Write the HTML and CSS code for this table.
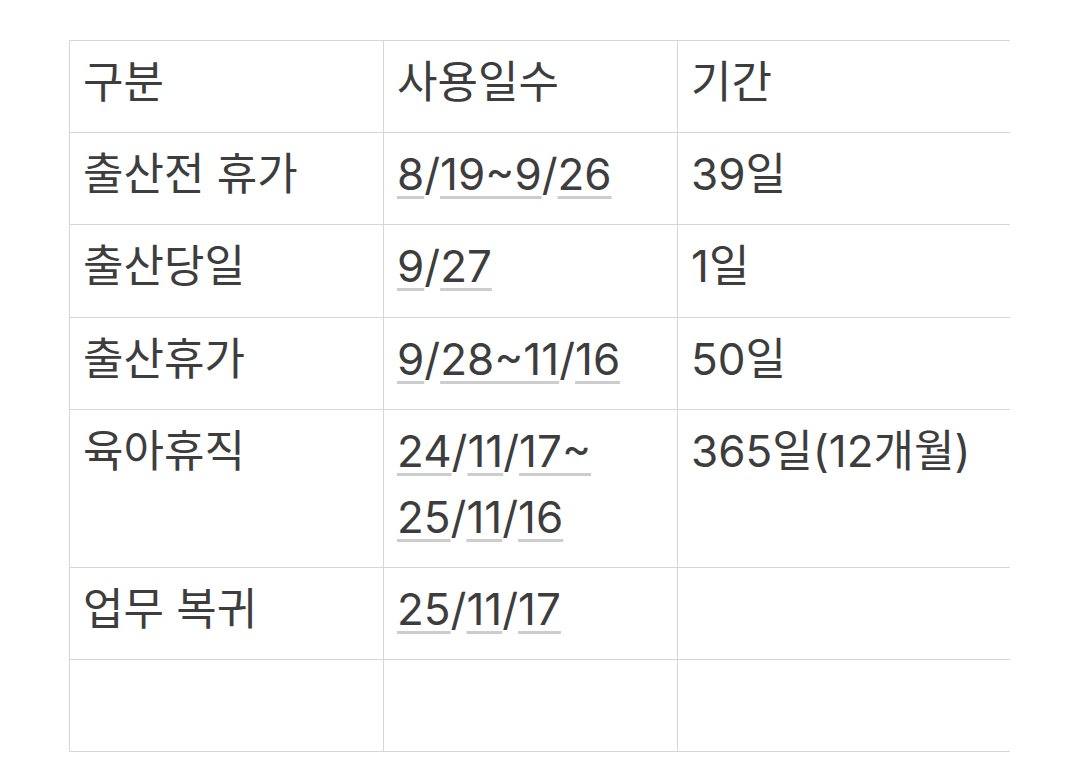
FILE: index.html
```html
<!DOCTYPE html>
<html lang="ko">
<head>
<meta charset="utf-8">
<link rel="stylesheet" href="styles.css">
</head>
<body>
<div class="wrap">
  <table class="tbl">
    <colgroup>
      <col class="c1"><col class="c2"><col class="c3">
    </colgroup>
    <tr><td>구분</td><td>사용일수</td><td>기간</td></tr>
    <tr><td>출산전 휴가</td><td><span class="u">8</span>/<span class="u">19~9</span>/<span class="u">26</span></td><td>39일</td></tr>
    <tr><td>출산당일</td><td><span class="u">9</span>/<span class="u">27</span></td><td>1일</td></tr>
    <tr><td>출산휴가</td><td><span class="u">9</span>/<span class="u">28~11</span>/<span class="u">16</span></td><td>50일</td></tr>
    <tr><td>육아휴직</td><td><span class="u">24</span>/<span class="u">11</span>/<span class="u">17~</span><br><span class="u">25</span>/<span class="u">11</span>/<span class="u">16</span></td><td>365일(12개월)</td></tr>
    <tr><td>업무 복귀</td><td><span class="u">25</span>/<span class="u">11</span>/<span class="u">17</span></td><td></td></tr>
    <tr><td></td><td></td><td></td></tr>
  </table>
</div>
</body>
</html>
```
FILE: styles.css
```css
html, body {
  margin: 0;
  padding: 0;
  background: #ffffff;
}
body {
  font-family: Inter, "Noto Sans CJK KR", sans-serif;
  color: #3d3d3d;
}
.wrap {
  margin: 40px 0 0 69px;
  width: 941px;
  overflow: hidden;
}
.tbl {
  border-collapse: collapse;
  table-layout: fixed;
  width: 1100px;
}
.c1 { width: 314px; }
.c2 { width: 294px; }
.c3 { width: 492px; }
.tbl td {
  border: 1px solid #d6d6d6;
  vertical-align: top;
  padding: 8px 14px 17.2px 13px;
  font-size: 44px;
  line-height: 66px;
  height: 66px;
  white-space: nowrap;
}
.u {
  text-decoration: underline;
  text-decoration-color: #cdcdcd;
  text-decoration-thickness: 3px;
  text-underline-offset: 6px;
}
```
